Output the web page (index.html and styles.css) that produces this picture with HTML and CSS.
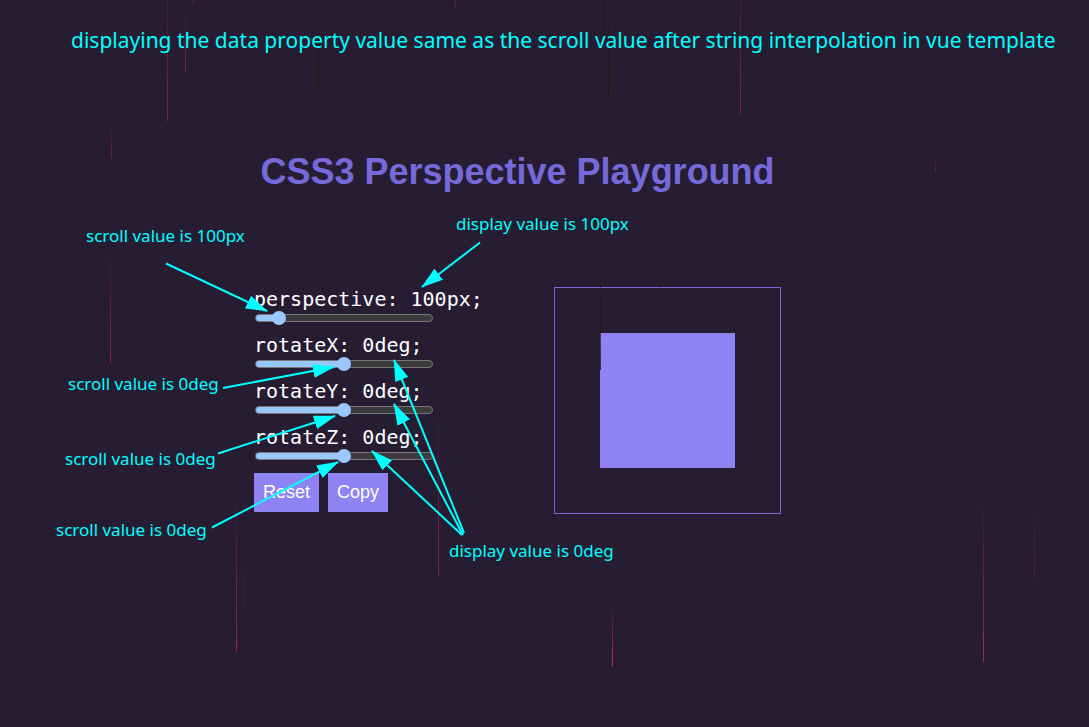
FILE: index.html
```
<!DOCTYPE html>
<html lang="en">
<head>
<meta charset="utf-8">
<title>CSS3 Perspective Playground</title>
<link rel="stylesheet" href="styles.css">
</head>
<body>
<main class="playground">
  <h1 class="title">CSS3 Perspective Playground</h1>
  <div class="workspace">
    <form class="controls">
      <div class="control">
        <label for="perspective">perspective: 100px;</label>
        <input class="slider slider-low" id="perspective" type="range" min="0" max="1000" value="100">
      </div>
      <div class="control">
        <label for="rotate-x">rotateX: 0deg;</label>
        <input class="slider" id="rotate-x" type="range" min="-180" max="180" value="0">
      </div>
      <div class="control">
        <label for="rotate-y">rotateY: 0deg;</label>
        <input class="slider" id="rotate-y" type="range" min="-180" max="180" value="0">
      </div>
      <div class="control">
        <label for="rotate-z">rotateZ: 0deg;</label>
        <input class="slider" id="rotate-z" type="range" min="-180" max="180" value="0">
      </div>
      <div class="actions">
        <button class="button" type="reset">Reset</button>
        <button class="button" type="button">Copy</button>
      </div>
    </form>
    <div class="frame"><div class="box"></div></div>
  </div>
</main>

<svg class="rain" aria-hidden="true">
  <defs>
    <linearGradient id="red" x1="0" y1="0" x2="0" y2="1">
      <stop offset="0" stop-color="#e0244f" stop-opacity="0"/>
      <stop offset="1" stop-color="#e0244f"/>
    </linearGradient>
    <linearGradient id="dark" x1="0" y1="0" x2="0" y2="1">
      <stop offset="0" stop-color="#1c1c08" stop-opacity="0"/>
      <stop offset="1" stop-color="#1c1c08"/>
    </linearGradient>
  </defs>
  <g fill="url(#red)">
    <rect x="167" y="-40" width="1" height="161" opacity=".5"/>
    <rect x="185" y="8" width="1" height="64" opacity=".5"/>
    <rect x="193" y="-20" width="1" height="23" opacity=".5"/>
    <rect x="455" y="-20" width="1" height="28" opacity=".25"/>
    <rect x="111" y="122" width="1" height="36" opacity=".35"/>
    <rect x="110" y="250" width="1" height="113" opacity=".6"/>
    <rect x="740" y="-60" width="1" height="174" opacity=".5"/>
    <rect x="935" y="158" width="1" height="13" opacity=".4"/>
    <rect x="236" y="490" width="1" height="161" opacity=".7"/>
    <rect x="244" y="550" width="1" height="60" opacity=".15"/>
    <rect x="438" y="395" width="1" height="181" opacity=".55"/>
    <rect x="612" y="607" width="1" height="59"/>
    <rect x="983" y="500" width="1" height="162" opacity=".8"/>
    <rect x="1034" y="495" width="1" height="84" opacity=".25"/>
  </g>
  <g fill="url(#dark)">
    <rect x="318" y="-60" width="1" height="150"/>
    <rect x="603" y="-200" width="1" height="232"/>
    <rect x="608" y="-60" width="1" height="158"/>
    <rect x="797" y="-80" width="1" height="152" opacity=".5"/>
    <rect x="685" y="-30" width="1" height="52" opacity=".3"/>
    <rect x="683" y="90" width="1" height="32" opacity=".3"/>
    <rect x="988" y="20" width="1" height="148" opacity=".35"/>
    <rect x="189" y="300" width="1" height="76" opacity=".7"/>
    <rect x="600" y="150" width="1" height="220" opacity=".8"/>
    <rect x="660" y="265" width="1" height="37" opacity=".7"/>
    <rect x="412" y="522" width="1" height="22" opacity=".6"/>
    <rect x="458" y="430" width="1" height="145" opacity=".8"/>
    <rect x="578" y="500" width="1" height="95" opacity=".4"/>
    <rect x="755" y="430" width="1" height="180" opacity=".5"/>
    <rect x="875" y="300" width="1" height="90" opacity=".25"/>
    <rect x="916" y="670" width="1" height="30" opacity=".5"/>
    <rect x="1010" y="510" width="1" height="95" opacity=".3"/>
  </g>
</svg>

<div class="annotations">
  <p class="note note-main">displaying the data property value same as the scroll value after string interpolation in vue template</p>
  <p class="note note-perspective">scroll value is 100px</p>
  <p class="note note-display-px">display value is 100px</p>
  <p class="note note-x">scroll value is 0deg</p>
  <p class="note note-y">scroll value is 0deg</p>
  <p class="note note-z">scroll value is 0deg</p>
  <p class="note note-display-deg">display value is 0deg</p>
  <svg class="arrows" aria-hidden="true">
    <defs>
      <marker id="head" markerUnits="userSpaceOnUse" markerWidth="22" markerHeight="14" refX="21" refY="7" orient="auto">
        <path d="M0 0 22 7 0 14Z" fill="#00ffff" stroke="none"/>
      </marker>
    </defs>
    <g stroke="#00ffff" stroke-width="2" fill="none">
      <path d="M166 263.500 267 311" marker-end="url(#head)"/>
      <path d="M480 242.500 422 287" marker-end="url(#head)"/>
      <path d="M223 388 334 367" marker-end="url(#head)"/>
      <path d="M218 453.500 335 416" marker-end="url(#head)"/>
      <path d="M212 527.500 338 462" marker-end="url(#head)"/>
      <path d="M464 533 394 360" marker-end="url(#head)"/>
      <path d="M463 535 394 404" marker-end="url(#head)"/>
      <path d="M462 535 372 451" marker-end="url(#head)"/>
    </g>
  </svg>
</div>
</body>
</html>
```
FILE: styles.css
```
* {
  box-sizing: border-box;
}

body {
  position: relative;
  min-height: 100vh;
  margin: 0;
  padding: 151px 54px 0 0;
  overflow: hidden;
  background: #271d33;
  color: #fff;
  font-family: "Liberation Sans", Arial, sans-serif;
}

.playground {
  max-width: 527px;
  margin: 0 auto;
}

.title {
  margin: 0 0 94px;
  color: #766adb;
  font-size: 36px;
  line-height: 42px;
  text-align: center;
  white-space: nowrap;
}

.workspace {
  display: flex;
  justify-content: space-between;
  align-items: flex-start;
}

.controls {
  display: flex;
  flex-direction: column;
  gap: 8px;
}

.control {
  display: flex;
  flex-direction: column;
  align-items: flex-start;
}

.control label {
  font-family: "DejaVu Sans Mono", monospace;
  font-size: 20px;
  line-height: 24px;
  white-space: nowrap;
}

.slider {
  --fill: 50%;
  appearance: none;
  width: 180px;
  height: 14px;
  margin: 0;
  padding: 0 1px;
  background: none;
}

.slider-low {
  --fill: 13%;
}

.slider::-webkit-slider-runnable-track {
  height: 8px;
  border: 1px solid #77757a;
  border-radius: 4px;
  background: linear-gradient(to right, #99c8ff var(--fill), #3b3b3b var(--fill));
}

.slider::-webkit-slider-thumb {
  appearance: none;
  width: 14px;
  height: 14px;
  margin-top: -4px;
  border-radius: 50%;
  background: #99c8ff;
}

.actions {
  display: flex;
  gap: 9px;
  padding-top: 2px;
}

.button {
  padding: 9px;
  border: 0;
  background: #8f82f3;
  color: #fff;
  font: 18px/21px "Liberation Sans", Arial, sans-serif;
}

.frame {
  display: grid;
  place-items: center;
  width: 227px;
  aspect-ratio: 1;
  border: 1px solid #766adb;
}

.box {
  width: 60%;
  aspect-ratio: 1;
  background: #8f82f3;
}

.rain,
.annotations,
.arrows {
  position: absolute;
  inset: 0;
  width: 100%;
  height: 100%;
  pointer-events: none;
}

.note {
  position: absolute;
  margin: 0;
  color: #00ffff;
  font-family: "Noto Sans", sans-serif;
  font-size: 17px;
  line-height: 24px;
  white-space: nowrap;
}

.note-main {
  top: 25px;
  left: 71px;
  font-size: 21px;
  line-height: 30px;
}

.note-perspective {
  top: 224px;
  left: 86px;
}

.note-display-px {
  top: 212px;
  left: 456px;
}

.note-x {
  top: 372px;
  left: 68px;
}

.note-y {
  top: 447px;
  left: 65px;
}

.note-z {
  top: 518px;
  left: 56px;
}

.note-display-deg {
  top: 539px;
  left: 449px;
}
```
